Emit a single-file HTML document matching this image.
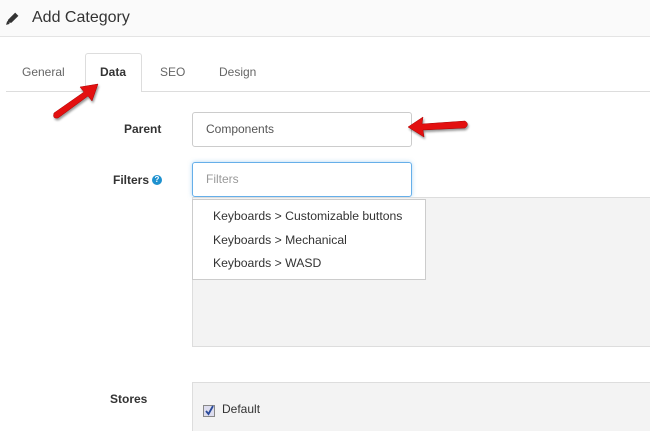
<!DOCTYPE html>
<html><head><style>
*{margin:0;padding:0;box-sizing:border-box}
html,body{width:650px;height:431px;overflow:hidden}
body{background:#fff;font-family:"Liberation Sans",sans-serif;position:relative;font-size:12px;color:#333}
.a{position:absolute}
</style></head><body>
<div class="a" style="left:0;top:0;width:650px;height:37px;background:#fafafa;border-bottom:1px solid #e4e4e4"></div>
<svg class="a" style="left:5px;top:11px" width="15" height="15" viewBox="0 0 14 14"><path d="M2 11 L3 8 L9.5 1.5 L12.5 4.5 L6 11 Z" fill="#333"/><path d="M1 13 L2 9.5 L4.5 12 Z" fill="#333"/></svg>
<div class="a" style="left:32px;top:9px;font-size:16px;color:#333">Add Category</div>
<div class="a" style="left:6px;top:91px;width:644px;height:1px;background:#ddd"></div>
<div class="a" style="left:85px;top:53px;width:57px;height:39px;background:#fff;border:1px solid #ddd;border-bottom:none;border-radius:3px 3px 0 0"></div>
<div class="a" style="left:22px;top:65px;color:#666">General</div>
<div class="a" style="left:100px;top:65px;font-weight:bold;color:#333">Data</div>
<div class="a" style="left:160px;top:65px;color:#666">SEO</div>
<div class="a" style="left:219px;top:65px;color:#666">Design</div>
<div class="a" style="left:124px;top:122px;font-weight:bold">Parent</div>
<div class="a" style="left:192px;top:112px;width:220px;height:35px;border:1px solid #ccc;border-radius:3px;padding:9px 13px;color:#555">Components</div>
<div class="a" style="left:113px;top:173px;font-weight:bold">Filters</div>
<div class="a" style="left:152px;top:175px;width:10px;height:10px;border-radius:50%;background:#1e91cf;color:#fff;font-size:8px;text-align:center;line-height:10px;font-weight:bold">?</div>
<div class="a" style="left:192px;top:162px;width:220px;height:35px;border:1px solid #66afe9;border-radius:3px;padding:9px 13px;color:#999;box-shadow:0 0 4px rgba(102,175,233,.5)">Filters</div>
<div class="a" style="left:192px;top:197px;width:458px;height:150px;background:#f3f3f3;border:1px solid #ddd;border-right:none"></div>
<div class="a" style="left:192px;top:199px;width:234px;height:81px;background:#fff;border:1px solid #ccc;padding:5px 0 0 20px;line-height:23.5px;color:#333;font-size:12.2px">Keyboards &gt; Customizable buttons<br>Keyboards &gt; Mechanical<br>Keyboards &gt; WASD</div>
<div class="a" style="left:110px;top:392px;font-weight:bold">Stores</div>
<div class="a" style="left:192px;top:382px;width:458px;height:49px;background:#f3f3f3;border:1px solid #ddd;border-right:none;border-bottom:none"></div>
<div class="a" style="left:203px;top:405px;width:12px;height:12px;border:1px solid #888;background:#dde;"></div>
<svg class="a" style="left:204px;top:405px" width="11" height="11"><path d="M2 6 L4.5 9 L9 1" stroke="#2a4a9a" stroke-width="1.8" fill="none"/></svg>
<div class="a" style="left:222px;top:402px">Default</div>
<svg class="a" style="left:0;top:0" width="650" height="431">
<g fill="#e31010" stroke="#a00" stroke-width="0.5" style="filter:drop-shadow(1px 2px 1px rgba(0,0,0,.4))">
<path d="M54 113 L84 92 L80 87 L98 84 L92 101 L88 96 L58 118 Q52 119 54 113 Z"/>
<path d="M465 121 L422 124 L423 117 L408 127 L424 137 L423 130 L465 128 Q470 124 465 121 Z"/>
</g></svg>
</body></html>
